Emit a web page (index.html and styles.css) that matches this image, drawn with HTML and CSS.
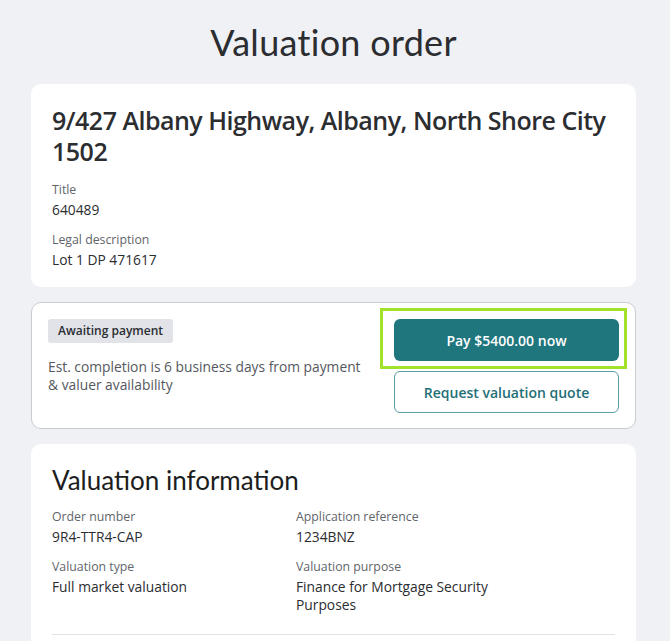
FILE: index.html
```html
<!DOCTYPE html>
<html lang="en">
<head>
<meta charset="utf-8">
<title>Valuation order</title>
<link rel="stylesheet" href="styles.css">
</head>
<body>
<main class="page">
  <h1 class="page-title">Valuation order</h1>

  <section class="card">
    <h2 class="address">9/427 Albany Highway, Albany, North Shore City 1502</h2>
    <dl class="fields">
      <div class="field">
        <dt>Title</dt>
        <dd>640489</dd>
      </div>
      <div class="field">
        <dt>Legal description</dt>
        <dd>Lot 1 DP 471617</dd>
      </div>
    </dl>
  </section>

  <section class="card card-outline status">
    <div class="status-info">
      <span class="badge">Awaiting payment</span>
      <p class="status-text">Est. completion is 6 business days from payment &amp; valuer availability</p>
    </div>
    <div class="actions">
      <button class="btn btn-primary highlighted">Pay $5400.00 now</button>
      <button class="btn btn-secondary">Request valuation quote</button>
    </div>
  </section>

  <section class="card info">
    <h2 class="section-title">Valuation information</h2>
    <dl class="grid">
      <div class="field">
        <dt>Order number</dt>
        <dd>9R4-TTR4-CAP</dd>
      </div>
      <div class="field">
        <dt>Application reference</dt>
        <dd>1234BNZ</dd>
      </div>
      <div class="field">
        <dt>Valuation type</dt>
        <dd>Full market valuation</dd>
      </div>
      <div class="field">
        <dt>Valuation purpose</dt>
        <dd>Finance for Mortgage Security Purposes</dd>
      </div>
    </dl>
    <hr class="divider">
  </section>
</main>
</body>
</html>
```

FILE: styles.css
```css
* { box-sizing: border-box; }

html, body {
  margin: 0;
  padding: 0;
  background: #f0f1f5;
}

body {
  font-family: "Open Sans", "Noto Sans", sans-serif;
  color: #2b2d31;
  overflow: hidden;
}

.page {
  width: 605px;
  margin: 0 auto 0 31px;
  display: flex;
  flex-direction: column;
  gap: 15px;
  padding-bottom: 40px;
}

.page-title {
  font-family: "Lato", "Open Sans", sans-serif;
  font-weight: 400;
  font-size: 36px;
  line-height: 44px;
  color: #2b2d31;
  text-align: center;
  margin: 20px 0 5px;
  letter-spacing: 0.3px;
}

.card {
  background: #fff;
  border-radius: 10px;
  padding: 21px 21px 18px;
}

.card-outline {
  border: 1px solid #c9ccd3;
}

.address {
  margin: 0 0 14px;
  font-size: 25px;
  font-weight: 600;
  line-height: 31px;
  color: #2b2d31;
  letter-spacing: -0.5px;
}

.fields {
  margin: 0;
  display: flex;
  flex-direction: column;
  gap: 12px;
}

.field dt {
  font-size: 12.3px;
  line-height: 18px;
  color: #62656b;
  margin-bottom: 2px;
}

.field dd {
  margin: 0;
  font-size: 13.8px;
  line-height: 18px;
  color: #2b2d31;
}

.status {
  display: flex;
  justify-content: space-between;
  align-items: flex-start;
  padding: 16px 16px 15px 16px;
}

.status-info {
  display: flex;
  flex-direction: column;
  align-items: flex-start;
  gap: 15px;
  width: 325px;
}

.badge {
  background: #e1e3e8;
  color: #2b2d31;
  font-size: 12px;
  font-weight: 600;
  line-height: 24px;
  padding: 0 10px;
  border-radius: 3px;
}

.status-text {
  margin: 0;
  font-size: 13.8px;
  line-height: 18px;
  color: #55585e;
}

.actions {
  display: flex;
  flex-direction: column;
  gap: 10px;
  width: 225px;
}

.btn {
  font-family: "Open Sans", "Noto Sans", sans-serif;
  font-size: 14px;
  height: 42px;
  border-radius: 6px;
  cursor: pointer;
}

.btn-primary {
  background: #1f767d;
  color: #fff;
  border: 0;
  font-weight: 600;
}

.btn-secondary {
  background: #fff;
  color: #1f6f76;
  border: 1px solid #5c9ea4;
  font-weight: 600;
}

.highlighted {
  position: relative;
}

.highlighted::after {
  content: "";
  position: absolute;
  top: -11px;
  bottom: -8px;
  left: -14px;
  right: -8px;
  border: 3px solid #a3e22a;
  pointer-events: none;
}

.info {
  padding-top: 20px;
}

.section-title {
  font-family: "Lato", "Open Sans", sans-serif;
  font-weight: 400;
  font-size: 26px;
  line-height: 32px;
  color: #1c1d20;
  margin: 0 0 12px;
}

.grid {
  margin: 0;
  display: grid;
  grid-template-columns: 244px 1fr;
  row-gap: 12px;
}

.grid .field dd {
  max-width: 210px;
}

.divider {
  border: 0;
  border-top: 1px solid #e1e3e8;
  margin: 20px 0 0;
}
```
